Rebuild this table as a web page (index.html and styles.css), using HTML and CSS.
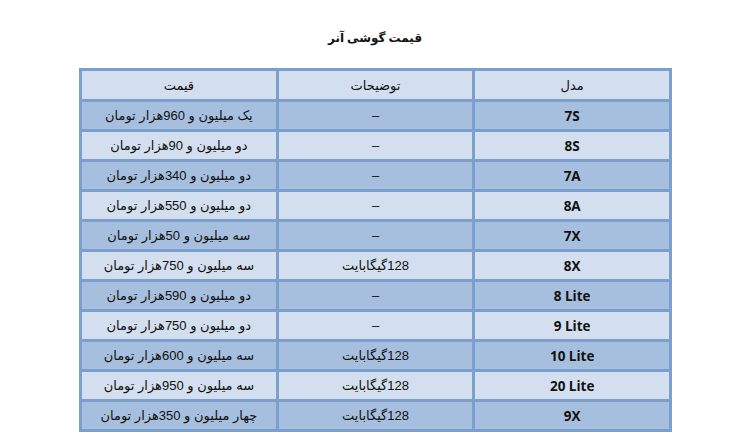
FILE: index.html
```html
<!DOCTYPE html>
<html lang="fa" dir="rtl">
<head>
<meta charset="utf-8">
<title>قیمت گوشی آنر</title>
<link rel="stylesheet" href="styles.css">
</head>
<body>
<h1 class="title">قیمت گوشی آنر</h1>
<table class="prices">
  <thead>
    <tr class="light"><th>مدل</th><th>توضیحات</th><th>قیمت</th></tr>
  </thead>
  <tbody>
    <tr class="dark"><td class="model">7S</td><td>–</td><td>یک میلیون و 960هزار تومان</td></tr>
    <tr class="light"><td class="model">8S</td><td>–</td><td>دو میلیون و 90هزار تومان</td></tr>
    <tr class="dark"><td class="model">7A</td><td>–</td><td>دو میلیون و 340هزار تومان</td></tr>
    <tr class="light"><td class="model">8A</td><td>–</td><td>دو میلیون و 550هزار تومان</td></tr>
    <tr class="dark"><td class="model">7X</td><td>–</td><td>سه میلیون و 50هزار تومان</td></tr>
    <tr class="light"><td class="model">8X</td><td>128گیگابایت</td><td>سه میلیون و 750هزار تومان</td></tr>
    <tr class="dark"><td class="model">8 Lite</td><td>–</td><td>دو میلیون و 590هزار تومان</td></tr>
    <tr class="light"><td class="model">9 Lite</td><td>–</td><td>دو میلیون و 750هزار تومان</td></tr>
    <tr class="dark"><td class="model">10 Lite</td><td>128گیگابایت</td><td>سه میلیون و 600هزار تومان</td></tr>
    <tr class="light"><td class="model">20 Lite</td><td>128گیگابایت</td><td>سه میلیون و 950هزار تومان</td></tr>
    <tr class="dark"><td class="model">9X</td><td>128گیگابایت</td><td>چهار میلیون و 350هزار تومان</td></tr>
  </tbody>
</table>
</body>
</html>
```

FILE: styles.css
```css
html, body {
  margin: 0;
  padding: 0;
  background: #ffffff;
}
body {
  font-family: "Liberation Sans", "DejaVu Sans", sans-serif;
  color: #111111;
}
.title {
  margin: 0;
  padding-top: 28px;
  height: 68px;
  box-sizing: border-box;
  text-align: center;
  font-family: "Liberation Serif", "DejaVu Sans", serif;
  font-weight: bold;
  font-size: 12px;
  line-height: 20px;
  width: 750px;
}
.prices {
  border-collapse: collapse;
  width: 593px;
  margin-right: 78px;
  table-layout: fixed;
  font-size: 13px;
  border: 2px solid #8eaedb;
}
.prices th,
.prices td {
  border: 3px solid #7ba0cd;
  text-align: center;
  vertical-align: middle;
  padding: 0 4px;
  height: 27px;
  font-weight: normal;
  white-space: nowrap;
}
.prices thead th {
  height: 28px;
}
.light {
  background: #d3dfee;
}
.dark {
  background: #a7bfde;
}
.prices .model {
  font-family: "Open Sans", "DejaVu Sans", sans-serif;
  font-weight: bold;
  font-size: 13.5px;
  direction: ltr;
}
```
